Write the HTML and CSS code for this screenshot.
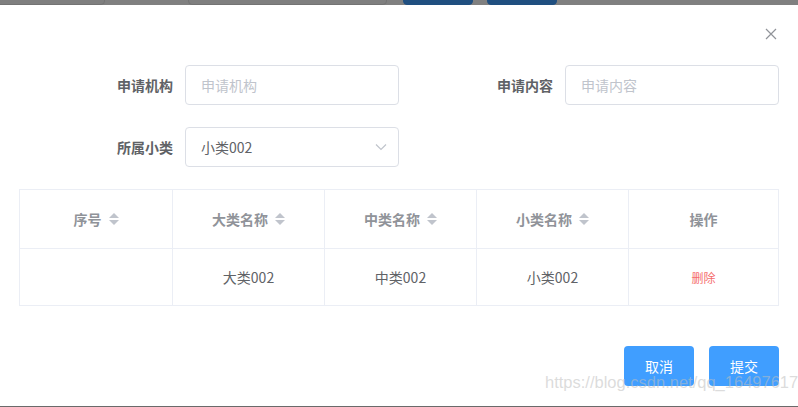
FILE: index.html
```html
<!DOCTYPE html>
<html lang="zh-CN">
<head>
<meta charset="utf-8">
<title>dialog</title>
<link rel="stylesheet" href="styles.css">
</head>
<body>
<div class="backdrop-top">
  <span class="ghost ghost-a"></span>
  <span class="ghost ghost-b"></span>
  <span class="ghost ghost-btn ghost-c"></span>
  <span class="ghost ghost-btn ghost-d"></span>
</div>
<div class="dialog">
  <div class="dialog-header">
    <button class="close" aria-label="close">
      <svg width="12" height="12" viewBox="0 0 12 12"><path d="M1 1L11 11M11 1L1 11" stroke="#909399" stroke-width="1.2" fill="none"/></svg>
    </button>
  </div>
  <form class="form">
    <div class="form-item">
      <label class="form-label">申请机构</label>
      <div class="input"><span class="placeholder">申请机构</span></div>
    </div>
    <div class="form-item">
      <label class="form-label">申请内容</label>
      <div class="input"><span class="placeholder">申请内容</span></div>
    </div>
    <div class="form-item">
      <label class="form-label">所属小类</label>
      <div class="input select"><span class="value">小类002</span>
        <svg class="arrow" width="12" height="8" viewBox="0 0 12 8"><path d="M1 1.5L6 6.5L11 1.5" stroke="#c0c4cc" stroke-width="1.2" fill="none"/></svg>
      </div>
    </div>
  </form>
  <div class="table">
    <div class="row head">
      <div class="cell">序号<span class="caret"></span></div>
      <div class="cell">大类名称<span class="caret"></span></div>
      <div class="cell">中类名称<span class="caret"></span></div>
      <div class="cell">小类名称<span class="caret"></span></div>
      <div class="cell">操作</div>
    </div>
    <div class="row body">
      <div class="cell"></div>
      <div class="cell">大类002</div>
      <div class="cell">中类002</div>
      <div class="cell">小类002</div>
      <div class="cell"><span class="danger">删除</span></div>
    </div>
  </div>
  <div class="footer">
    <button class="btn">取消</button>
    <button class="btn">提交</button>
  </div>
  <div class="watermark">https://blog.csdn.net/qq_16497617</div>
</div>
<div class="backdrop-bottom"></div>
</body>
</html>
```
FILE: styles.css
```css
* { box-sizing: border-box; }
html, body { margin: 0; padding: 0; }
body {
  width: 798px;
  height: 407px;
  overflow: hidden;
  background: #7f7f7f;
  font-family: "Noto Sans CJK SC", "Liberation Sans", sans-serif;
  font-size: 14px;
  color: #606266;
}
.backdrop-top {
  height: 5px;
  position: relative;
  overflow: hidden;
  background: #808080;
}
.ghost {
  position: absolute;
  top: -30px;
  height: 35px;
  border: 1px solid #737373;
  border-radius: 4px;
  background: #7f7f7f;
}
.ghost-a { left: -4px; width: 109px; }
.ghost-b { left: 188px; width: 199px; }
.ghost-btn { background: #204f80; border-color: #204f80; }
.ghost-c { left: 403px; width: 70px; }
.ghost-d { left: 487px; width: 70px; }

.dialog {
  position: relative;
  height: 401px;
  background: #fff;
  padding: 0 19px 0 19px;
}
.dialog-header {
  height: 60px;
  display: flex;
  justify-content: flex-end;
  align-items: flex-start;
  padding-top: 23px;
}
.close {
  border: 0;
  background: none;
  padding: 0;
  width: 12px;
  height: 12px;
  margin-right: 2px;
  display: flex;
}
.form {
  display: grid;
  grid-template-columns: 1fr 1fr;
  row-gap: 22px;
  margin-top: 0;
}
.form-item {
  display: flex;
  align-items: center;
  height: 40px;
}
.form-label {
  width: 166px;
  text-align: right;
  padding-right: 12px;
  font-weight: 700;
  color: #606266;
}
.input {
  width: 214px;
  height: 40px;
  border: 1px solid #dcdfe6;
  border-radius: 4px;
  padding: 0 15px;
  display: flex;
  align-items: center;
}
.placeholder { color: #c0c4cc; }
.select { justify-content: space-between; }
.select .value { color: #606266; }
.select .arrow { margin-right: -4px; }

.table {
  margin-top: 22px;
  border: 1px solid #ebeef5;
}
.row {
  display: grid;
  grid-template-columns: 153px 152px 152px 152px 1fr;
}
.row.head { height: 59px; border-bottom: 1px solid #ebeef5; }
.row.body { height: 56px; }
.cell {
  display: flex;
  align-items: center;
  justify-content: center;
  border-right: 1px solid #ebeef5;
}
.cell:last-child { border-right: 0; }
.head .cell { color: #909399; font-weight: 700; }
.body .cell { color: #606266; }
.caret {
  position: relative;
  display: inline-block;
  width: 10px;
  height: 12px;
  margin-left: 7px;
}
.caret::before, .caret::after {
  content: "";
  position: absolute;
  left: 0;
  border: 5px solid transparent;
}
.caret::before { top: -5px; border-bottom-color: #c0c4cc; }
.caret::after { bottom: -5px; border-top-color: #c0c4cc; }
.danger { color: #f56c6c; font-size: 12px; }

.footer {
  display: flex;
  justify-content: flex-end;
  gap: 15px;
  margin-top: 40px;
}
.btn {
  width: 70px;
  height: 40px;
  border: 0;
  border-radius: 4px;
  background: #409eff;
  color: #fff;
  font-family: inherit;
  font-size: 14px;
  padding: 0;
}
.watermark {
  position: absolute;
  left: 545px;
  top: 368px;
  font-family: "Liberation Sans", sans-serif;
  font-size: 16.5px;
  color: rgba(190, 190, 190, 0.55);
  white-space: nowrap;
}
.backdrop-bottom {
  height: 1px;
  background: #6a6a6a;
}
```
